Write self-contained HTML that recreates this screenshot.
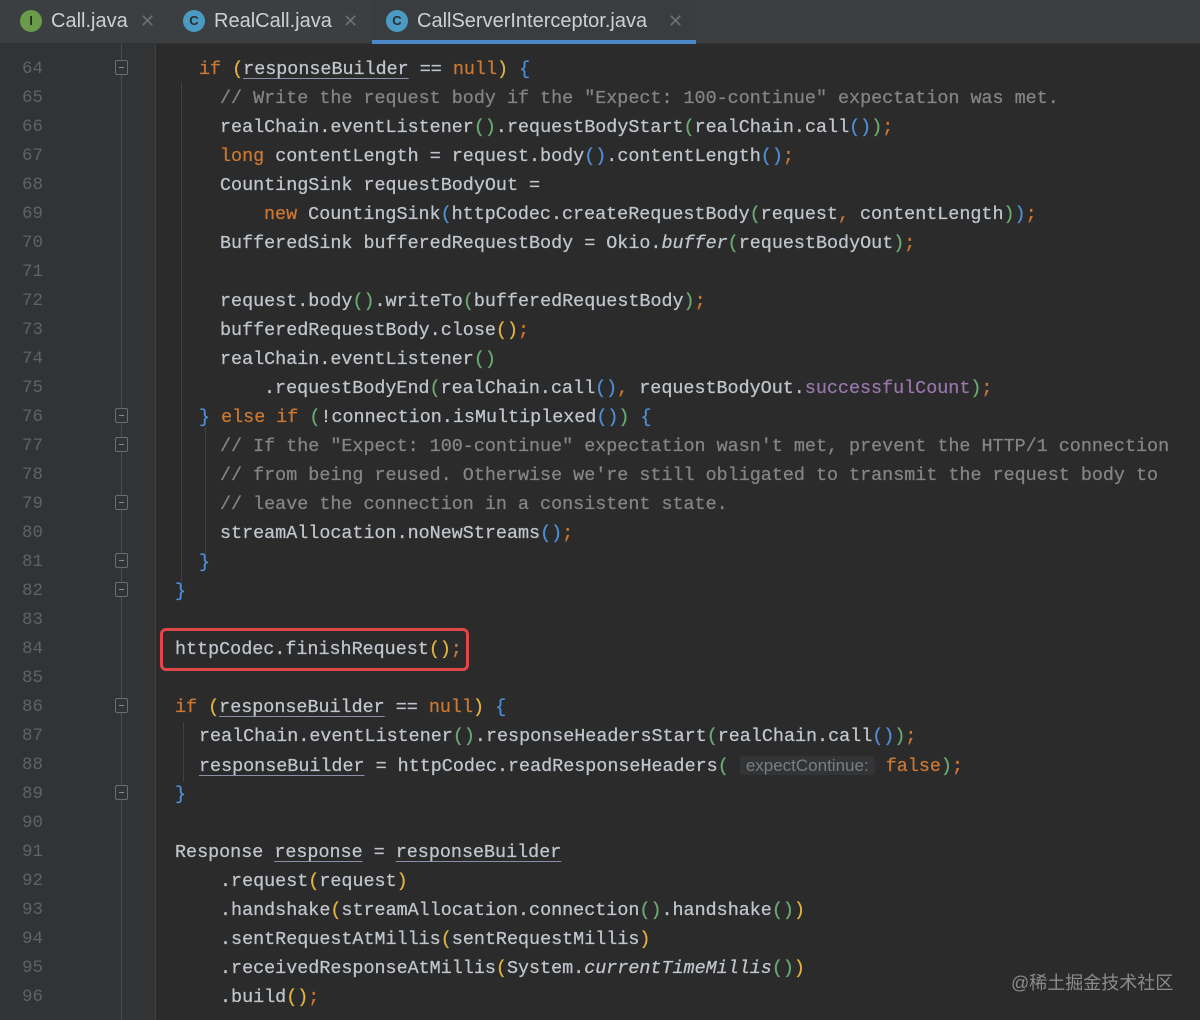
<!DOCTYPE html>
<html><head><meta charset="utf-8"><style>
*{margin:0;padding:0;box-sizing:border-box}
body{width:1200px;height:1020px;background:#2b2b2b;position:relative;overflow:hidden;font-family:"Liberation Mono",monospace}
#tabs{position:absolute;left:0;top:0;width:1200px;height:44px;background:#3c3f41;border-bottom:1px solid #323232}
.tab{position:absolute;top:0;height:42px;font-family:"Liberation Sans",sans-serif;font-size:20px;color:#cfcfcf;line-height:42px}
.ic{position:absolute;top:10px;width:22px;height:22px;border-radius:50%;font-size:13px;line-height:22px;text-align:center;color:#2b2b2b;font-weight:bold}
.x{color:#6e6e6e;font-size:18px;position:absolute;top:0}
#gut{position:absolute;left:0;top:44px;width:155px;height:976px;background:#313335}
#gl{position:absolute;left:155px;top:44px;width:1px;height:976px;background:#3c3f41}
#fold{position:absolute;left:121px;top:44px;width:1px;height:976px;background:#4a4d50}
.n{position:absolute;left:22px;width:30px;font-size:17.5px;color:#5f6366;line-height:29px}
.L{position:absolute;height:29px;line-height:29px;font-size:18.4px;color:#c0c6cd;white-space:pre;-webkit-text-stroke:0.25px currentColor}
.k{color:#cc7832}.c{color:#858585}.y{color:#e3b341}.g{color:#6aab73}.b{color:#4f8fd6}.p{color:#9876aa}.u{text-decoration:underline;text-decoration-color:#8a8fa8;text-underline-offset:4px}
.i{font-style:italic}
.h{font-family:"Liberation Sans",sans-serif;font-size:17px;color:#7a7e82;background:#323436;padding:0 6px;border-radius:3px;-webkit-text-stroke:0}
.fm{position:absolute;left:115px;width:13px;height:15px;border:1px solid #6a6d70;background:#313335;border-radius:2px}
.fm:after{content:"";position:absolute;left:3px;top:6px;width:5px;height:1px;background:#8a8d90}
.vg{position:absolute;width:1px;background:#3d4144}
</style></head><body>
<div id="tabs">
 <div class="tab" style="left:20px"><span class="ic" style="left:0;background:#6a9b4a">I</span><span style="position:absolute;left:31px">Call.java</span><span class="x" style="left:120px">✕</span></div>
 <div class="tab" style="left:183px"><span class="ic" style="left:0;background:#4a9ac2">C</span><span style="position:absolute;left:31px">RealCall.java</span><span class="x" style="left:160px">✕</span></div>
 <div class="tab" style="left:372px;width:324px;background:#3a3d3f"><span class="ic" style="left:14px;background:#4a9ac2">C</span><span style="position:absolute;left:45px">CallServerInterceptor.java</span><span class="x" style="left:296px">✕</span><div style="position:absolute;left:0;bottom:-2px;width:324px;height:4px;background:#4a88c7"></div></div>
</div>
<div id="gut"></div><div id="gl"></div><div id="fold"></div>
<div class="vg" style="left:181px;top:82px;height:505px"></div>
<div class="vg" style="left:205px;top:427px;height:130px"></div>
<div class="vg" style="left:183px;top:722px;height:60px"></div>
<div class="fm" style="top:60px"></div>
<div class="fm" style="top:408px"></div>
<div class="fm" style="top:437px"></div>
<div class="fm" style="top:495px"></div>
<div class="fm" style="top:553px"></div>
<div class="fm" style="top:582px"></div>
<div class="fm" style="top:698px"></div>
<div class="fm" style="top:785px"></div>
<div class="n" style="top:55px">64</div><div class="n" style="top:84px">65</div><div class="n" style="top:113px">66</div><div class="n" style="top:142px">67</div><div class="n" style="top:171px">68</div><div class="n" style="top:200px">69</div><div class="n" style="top:229px">70</div><div class="n" style="top:258px">71</div><div class="n" style="top:287px">72</div><div class="n" style="top:316px">73</div><div class="n" style="top:345px">74</div><div class="n" style="top:374px">75</div><div class="n" style="top:403px">76</div><div class="n" style="top:432px">77</div><div class="n" style="top:461px">78</div><div class="n" style="top:490px">79</div><div class="n" style="top:519px">80</div><div class="n" style="top:548px">81</div><div class="n" style="top:577px">82</div><div class="n" style="top:606px">83</div><div class="n" style="top:635px">84</div><div class="n" style="top:664px">85</div><div class="n" style="top:693px">86</div><div class="n" style="top:722px">87</div><div class="n" style="top:751px">88</div><div class="n" style="top:780px">89</div><div class="n" style="top:809px">90</div><div class="n" style="top:838px">91</div><div class="n" style="top:867px">92</div><div class="n" style="top:896px">93</div><div class="n" style="top:925px">94</div><div class="n" style="top:954px">95</div><div class="n" style="top:983px">96</div>

<div class="L" style="left:199px;top:55px"><span class="k">if </span><span class="y">(</span><span class="u">responseBuilder</span> == <span class="k">null</span><span class="y">)</span> <span class="b">{</span></div>
<div class="L c" style="left:220px;top:84px">// Write the request body if the "Expect: 100-continue" expectation was met.</div>
<div class="L" style="left:220px;top:113px">realChain.eventListener<span class="g">()</span>.requestBodyStart<span class="g">(</span>realChain.call<span class="b">()</span><span class="g">)</span><span class="k">;</span></div>
<div class="L" style="left:220px;top:142px"><span class="k">long </span>contentLength = request.body<span class="b">()</span>.contentLength<span class="b">()</span><span class="k">;</span></div>
<div class="L" style="left:220px;top:171px">CountingSink requestBodyOut =</div>
<div class="L" style="left:264px;top:200px"><span class="k">new </span>CountingSink<span class="b">(</span>httpCodec.createRequestBody<span class="g">(</span>request<span class="k">, </span>contentLength<span class="g">)</span><span class="b">)</span><span class="k">;</span></div>
<div class="L" style="left:220px;top:229px">BufferedSink bufferedRequestBody = Okio.<span class="i">buffer</span><span class="g">(</span>requestBodyOut<span class="g">)</span><span class="k">;</span></div>
<div class="L" style="left:220px;top:287px">request.body<span class="g">()</span>.writeTo<span class="g">(</span>bufferedRequestBody<span class="g">)</span><span class="k">;</span></div>
<div class="L" style="left:220px;top:316px">bufferedRequestBody.close<span class="y">()</span><span class="k">;</span></div>
<div class="L" style="left:220px;top:345px">realChain.eventListener<span class="g">()</span></div>
<div class="L" style="left:264px;top:374px">.requestBodyEnd<span class="g">(</span>realChain.call<span class="b">()</span><span class="k">, </span>requestBodyOut.<span class="p">successfulCount</span><span class="g">)</span><span class="k">;</span></div>
<div class="L" style="left:199px;top:403px"><span class="b">}</span> <span class="k">else if </span><span class="g">(</span>!connection.isMultiplexed<span class="b">()</span><span class="g">)</span> <span class="b">{</span></div>
<div class="L c" style="left:220px;top:432px">// If the "Expect: 100-continue" expectation wasn't met, prevent the HTTP/1 connection</div>
<div class="L c" style="left:220px;top:461px">// from being reused. Otherwise we're still obligated to transmit the request body to</div>
<div class="L c" style="left:220px;top:490px">// leave the connection in a consistent state.</div>
<div class="L" style="left:220px;top:519px">streamAllocation.noNewStreams<span class="b">()</span><span class="k">;</span></div>
<div class="L" style="left:199px;top:548px"><span class="b">}</span></div>
<div class="L" style="left:175px;top:577px"><span class="b">}</span></div>
<div style="position:absolute;left:160px;top:628px;width:309px;height:43px;border:3px solid #e0464a;border-radius:6px"></div>
<div class="L" style="left:175px;top:635px">httpCodec.finishRequest<span class="y">()</span><span class="k">;</span></div>
<div class="L" style="left:175px;top:693px"><span class="k">if </span><span class="y">(</span><span class="u">responseBuilder</span> == <span class="k">null</span><span class="y">)</span> <span class="b">{</span></div>
<div class="L" style="left:199px;top:722px">realChain.eventListener<span class="g">()</span>.responseHeadersStart<span class="g">(</span>realChain.call<span class="b">()</span><span class="g">)</span><span class="k">;</span></div>
<div class="L" style="left:199px;top:751px"><span class="u">responseBuilder</span> = httpCodec.readResponseHeaders<span class="g">(</span> <span class="h">expectContinue:</span> <span class="k">false</span><span class="g">)</span><span class="k">;</span></div>
<div class="L" style="left:175px;top:780px"><span class="b">}</span></div>
<div class="L" style="left:175px;top:838px">Response <span class="u">response</span> = <span class="u">responseBuilder</span></div>
<div class="L" style="left:220px;top:867px">.request<span class="y">(</span>request<span class="y">)</span></div>
<div class="L" style="left:220px;top:896px">.handshake<span class="y">(</span>streamAllocation.connection<span class="g">()</span>.handshake<span class="g">()</span><span class="y">)</span></div>
<div class="L" style="left:220px;top:925px">.sentRequestAtMillis<span class="y">(</span>sentRequestMillis<span class="y">)</span></div>
<div class="L" style="left:220px;top:954px">.receivedResponseAtMillis<span class="y">(</span>System.<span class="i">currentTimeMillis</span><span class="g">()</span><span class="y">)</span></div>
<div class="L" style="left:220px;top:983px">.build<span class="y">()</span><span class="k">;</span></div>
<div style="position:absolute;left:1011px;top:969px;font-family:'Liberation Sans','Noto Sans CJK SC',sans-serif;font-size:18px;color:#8a8c8e">@稀土掘金技术社区</div>
</body></html>
